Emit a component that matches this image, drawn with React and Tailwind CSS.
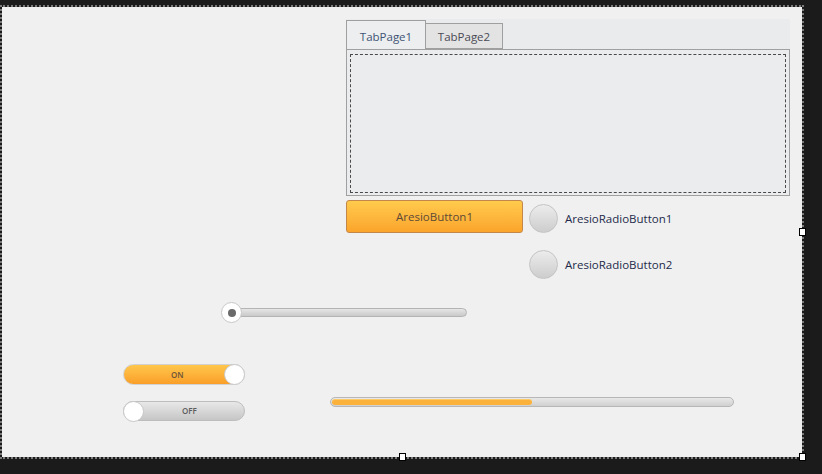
export default function App() {
  const font = { fontFamily: '"Open Sans", "Noto Sans", sans-serif' }

  return (
    <div className="relative w-[822px] h-[474px] bg-[#1b1b1b] overflow-hidden" style={font}>
      {/* designer form surface */}
      <div className="absolute left-0 top-[5px] w-[804px] h-[454px] border-2 border-dotted border-[#7a7a7a]">
        <div className="w-full h-full bg-[#f0f0f0] flex flex-col">
          {/* tab control */}
          <div className="ml-[344px] mt-[12px] w-[444px] flex flex-col">
            <div className="h-[30px] bg-[#eaebec] flex items-end">
              <div className="w-[80px] h-[29px] pt-[3px] bg-[#eceef0] border border-b-0 border-[#9f9f9f] flex items-center justify-center text-[11.5px] text-[#3f5474]">
                TabPage1
              </div>
              <div className="w-[77px] h-[26px] pt-[2px] bg-[#e3e3e3] border border-l-0 border-[#9f9f9f] flex items-center justify-center text-[11.5px] text-[#4a4a55]">
                TabPage2
              </div>
            </div>
            <div className="h-[147px] bg-[#ebecee] border border-[#a0a0a0] pt-[4px] px-[3px] pb-[2px]">
              <div className="w-full h-full border border-dashed border-[#4a4a4a]" />
            </div>
          </div>

          {/* button + radios */}
          <div className="mt-[4px] flex items-start">
            <button className="ml-[344px] w-[177px] h-[33px] rounded-[3px] border border-[#c4874a] bg-gradient-to-b from-[#ffcb4d] to-[#fba42b] text-[11.5px] text-[#5e4a36]">
              AresioButton1
            </button>
            <div className="ml-[6px] pt-[4px] flex flex-col gap-[17px]">
              {['AresioRadioButton1', 'AresioRadioButton2'].map((t) => (
                <div key={t} className="flex items-center gap-[7px]">
                  <div className="w-[29px] h-[29px] rounded-full border border-[#c4c4c4] bg-gradient-to-b from-[#ececec] to-[#cdcdcd]" />
                  <span className="text-[11.5px] text-[#1e2a4a]">{t}</span>
                </div>
              ))}
            </div>
          </div>

          {/* slider */}
          <div className="mt-[23px] ml-[219px] flex items-center">
            <div className="relative z-10 w-[21px] h-[21px] rounded-full bg-white border border-[#c8c8c8] flex items-center justify-center">
              <div className="w-[8px] h-[8px] rounded-full bg-[#6a6a6a]" />
            </div>
            <div className="-ml-[16px] w-[241px] h-[9px] rounded-full border border-[#b4b4b4] bg-gradient-to-b from-[#e6e6e6] to-[#c9c9c9]" />
          </div>

          {/* toggles + progress */}
          <div className="mt-[41px] flex items-start">
            <div className="ml-[121px] flex flex-col gap-[16px]">
              <div className="relative w-[122px] h-[21px] rounded-full border border-[#d2d2d2] bg-gradient-to-b from-[#ffc64b] to-[#fa9f28] flex items-center">
                <span className="ml-[47px] text-[8px] font-semibold text-[#6a5437]">ON</span>
                <div className="absolute -right-[1px] -top-[1px] w-[21px] h-[21px] rounded-full bg-white border border-[#c8c8c8]" />
              </div>
              <div className="relative w-[122px] h-[20px] rounded-full border border-[#bdbdbd] bg-gradient-to-b from-[#e8e8e8] to-[#c6c6c6] flex items-center">
                <span className="ml-[58px] text-[8px] font-semibold text-[#5c5c5c]">OFF</span>
                <div className="absolute -left-[1px] -top-[1px] w-[21px] h-[21px] rounded-full bg-white border border-[#c8c8c8]" />
              </div>
            </div>
            <div className="ml-[85px] mt-[33px] w-[404px] h-[10px] rounded-full border border-[#b7b7b7] bg-gradient-to-b from-[#e8e8e8] to-[#d0d0d0] p-[1px] flex">
              <div className="w-[200px] h-full rounded-full bg-[#fbb23c] border-t border-[#fdca6a]" />
            </div>
          </div>
        </div>
      </div>

      {/* selection handles */}
      <div className="absolute left-[799px] top-[228px] w-[7px] h-[8px] bg-white border border-black" />
      <div className="absolute left-[399px] top-[453px] w-[7px] h-[8px] bg-white border border-black" />
      <div className="absolute left-[799px] top-[453px] w-[7px] h-[8px] bg-white border border-black" />
    </div>
  )
}
